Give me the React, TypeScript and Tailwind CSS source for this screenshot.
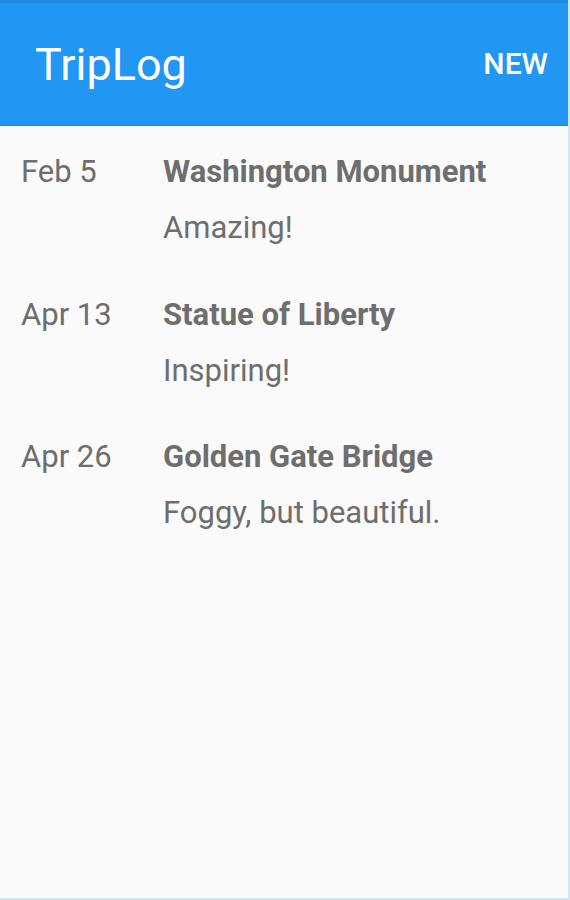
const trips = [
  { date: 'Feb 5', title: 'Washington Monument', notes: 'Amazing!' },
  { date: 'Apr 13', title: 'Statue of Liberty', notes: 'Inspiring!' },
  { date: 'Apr 26', title: 'Golden Gate Bridge', notes: 'Foggy, but beautiful.' },
];

export default function App() {
  return (
    <div className="flex h-[900px] w-[570px] flex-col border-r-2 border-b-2 border-[#cfe6f7] bg-[#fafafa] font-['Roboto',sans-serif]">
      <header className="flex h-[126px] shrink-0 items-center justify-between border-t-[3px] border-b border-t-[#1a88e3] border-b-[#1a86de] bg-[#2196f3] pl-[35px] pr-[20px]">
        <h1 className="text-[45px] leading-none text-white">TripLog</h1>
        <button className="text-[30px] font-medium leading-none text-white">NEW</button>
      </header>
      <ul className="flex flex-col pt-[28px]">
        {trips.map((trip) => (
          <li key={trip.title} className="flex h-[142.5px] pl-[21px]">
            <span className="w-[142px] text-[31px] leading-[36px] text-[#6e6e6e]">{trip.date}</span>
            <div className="flex flex-col gap-[20px]">
              <span className="text-[31px] font-bold leading-[36px] text-[#6e6e6e]">{trip.title}</span>
              <span className="text-[31px] leading-[36px] text-[#6e6e6e]">{trip.notes}</span>
            </div>
          </li>
        ))}
      </ul>
    </div>
  );
}
